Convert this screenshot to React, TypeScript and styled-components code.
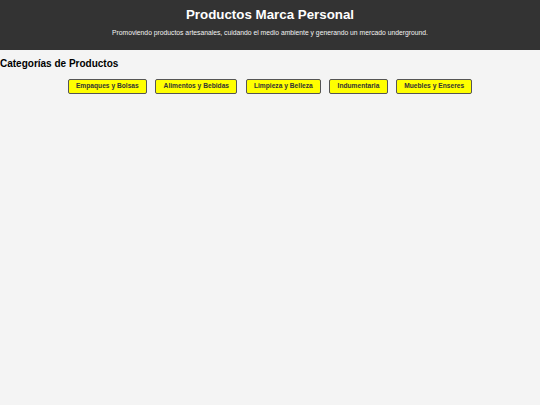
import React from "react";
import styled, { createGlobalStyle } from "styled-components";

const GlobalStyle = createGlobalStyle`
  html, body {
    margin: 0;
    padding: 0;
    background: #f4f4f4;
    font-family: "Liberation Sans", Arial, sans-serif;
  }
`;

const Header = styled.header`
  background: #333333;
  color: #ffffff;
  text-align: center;
  height: 50px;
  box-sizing: border-box;
  padding-top: 7px;
`;

const Title = styled.h1`
  margin: 0;
  font-size: 13.33px;
  line-height: 15px;
  font-weight: bold;
`;

const Subtitle = styled.p`
  margin: 7.2px 0 0;
  font-size: 6.78px;
  line-height: 8px;
  color: #f2f2f2;
`;

const Section = styled.section`
  padding: 0;
`;

const SectionTitle = styled.h2`
  margin: 8px 0 0;
  font-size: 10px;
  line-height: 11.5px;
  font-weight: bold;
  color: #000;
`;

const CategoryBar = styled.nav`
  display: flex;
  justify-content: center;
  gap: 8.33px;
  margin-top: 9px;
`;

const CategoryButton = styled.button`
  height: 15px;
  box-sizing: border-box;
  padding: 0 7.25px;
  background: #ffff00;
  color: #333333;
  border: 1px solid #555555;
  border-radius: 2px;
  font-family: "Liberation Sans", Arial, sans-serif;
  font-size: 6.67px;
  font-weight: bold;
  line-height: 1;
  cursor: pointer;
  white-space: nowrap;
`;

const categories = [
  "Empaques y Bolsas",
  "Alimentos y Bebidas",
  "Limpieza y Belleza",
  "Indumentaria",
  "Muebles y Enseres",
];

export default function App() {
  return (
    <>
      <GlobalStyle />
      <Header>
        <Title>Productos Marca Personal</Title>
        <Subtitle>
          Promoviendo productos artesanales, cuidando el medio ambiente y generando un mercado underground.
        </Subtitle>
      </Header>
      <Section>
        <SectionTitle>Categorías de Productos</SectionTitle>
        <CategoryBar>
          {categories.map((c) => (
            <CategoryButton key={c}>{c}</CategoryButton>
          ))}
        </CategoryBar>
      </Section>
    </>
  );
}
